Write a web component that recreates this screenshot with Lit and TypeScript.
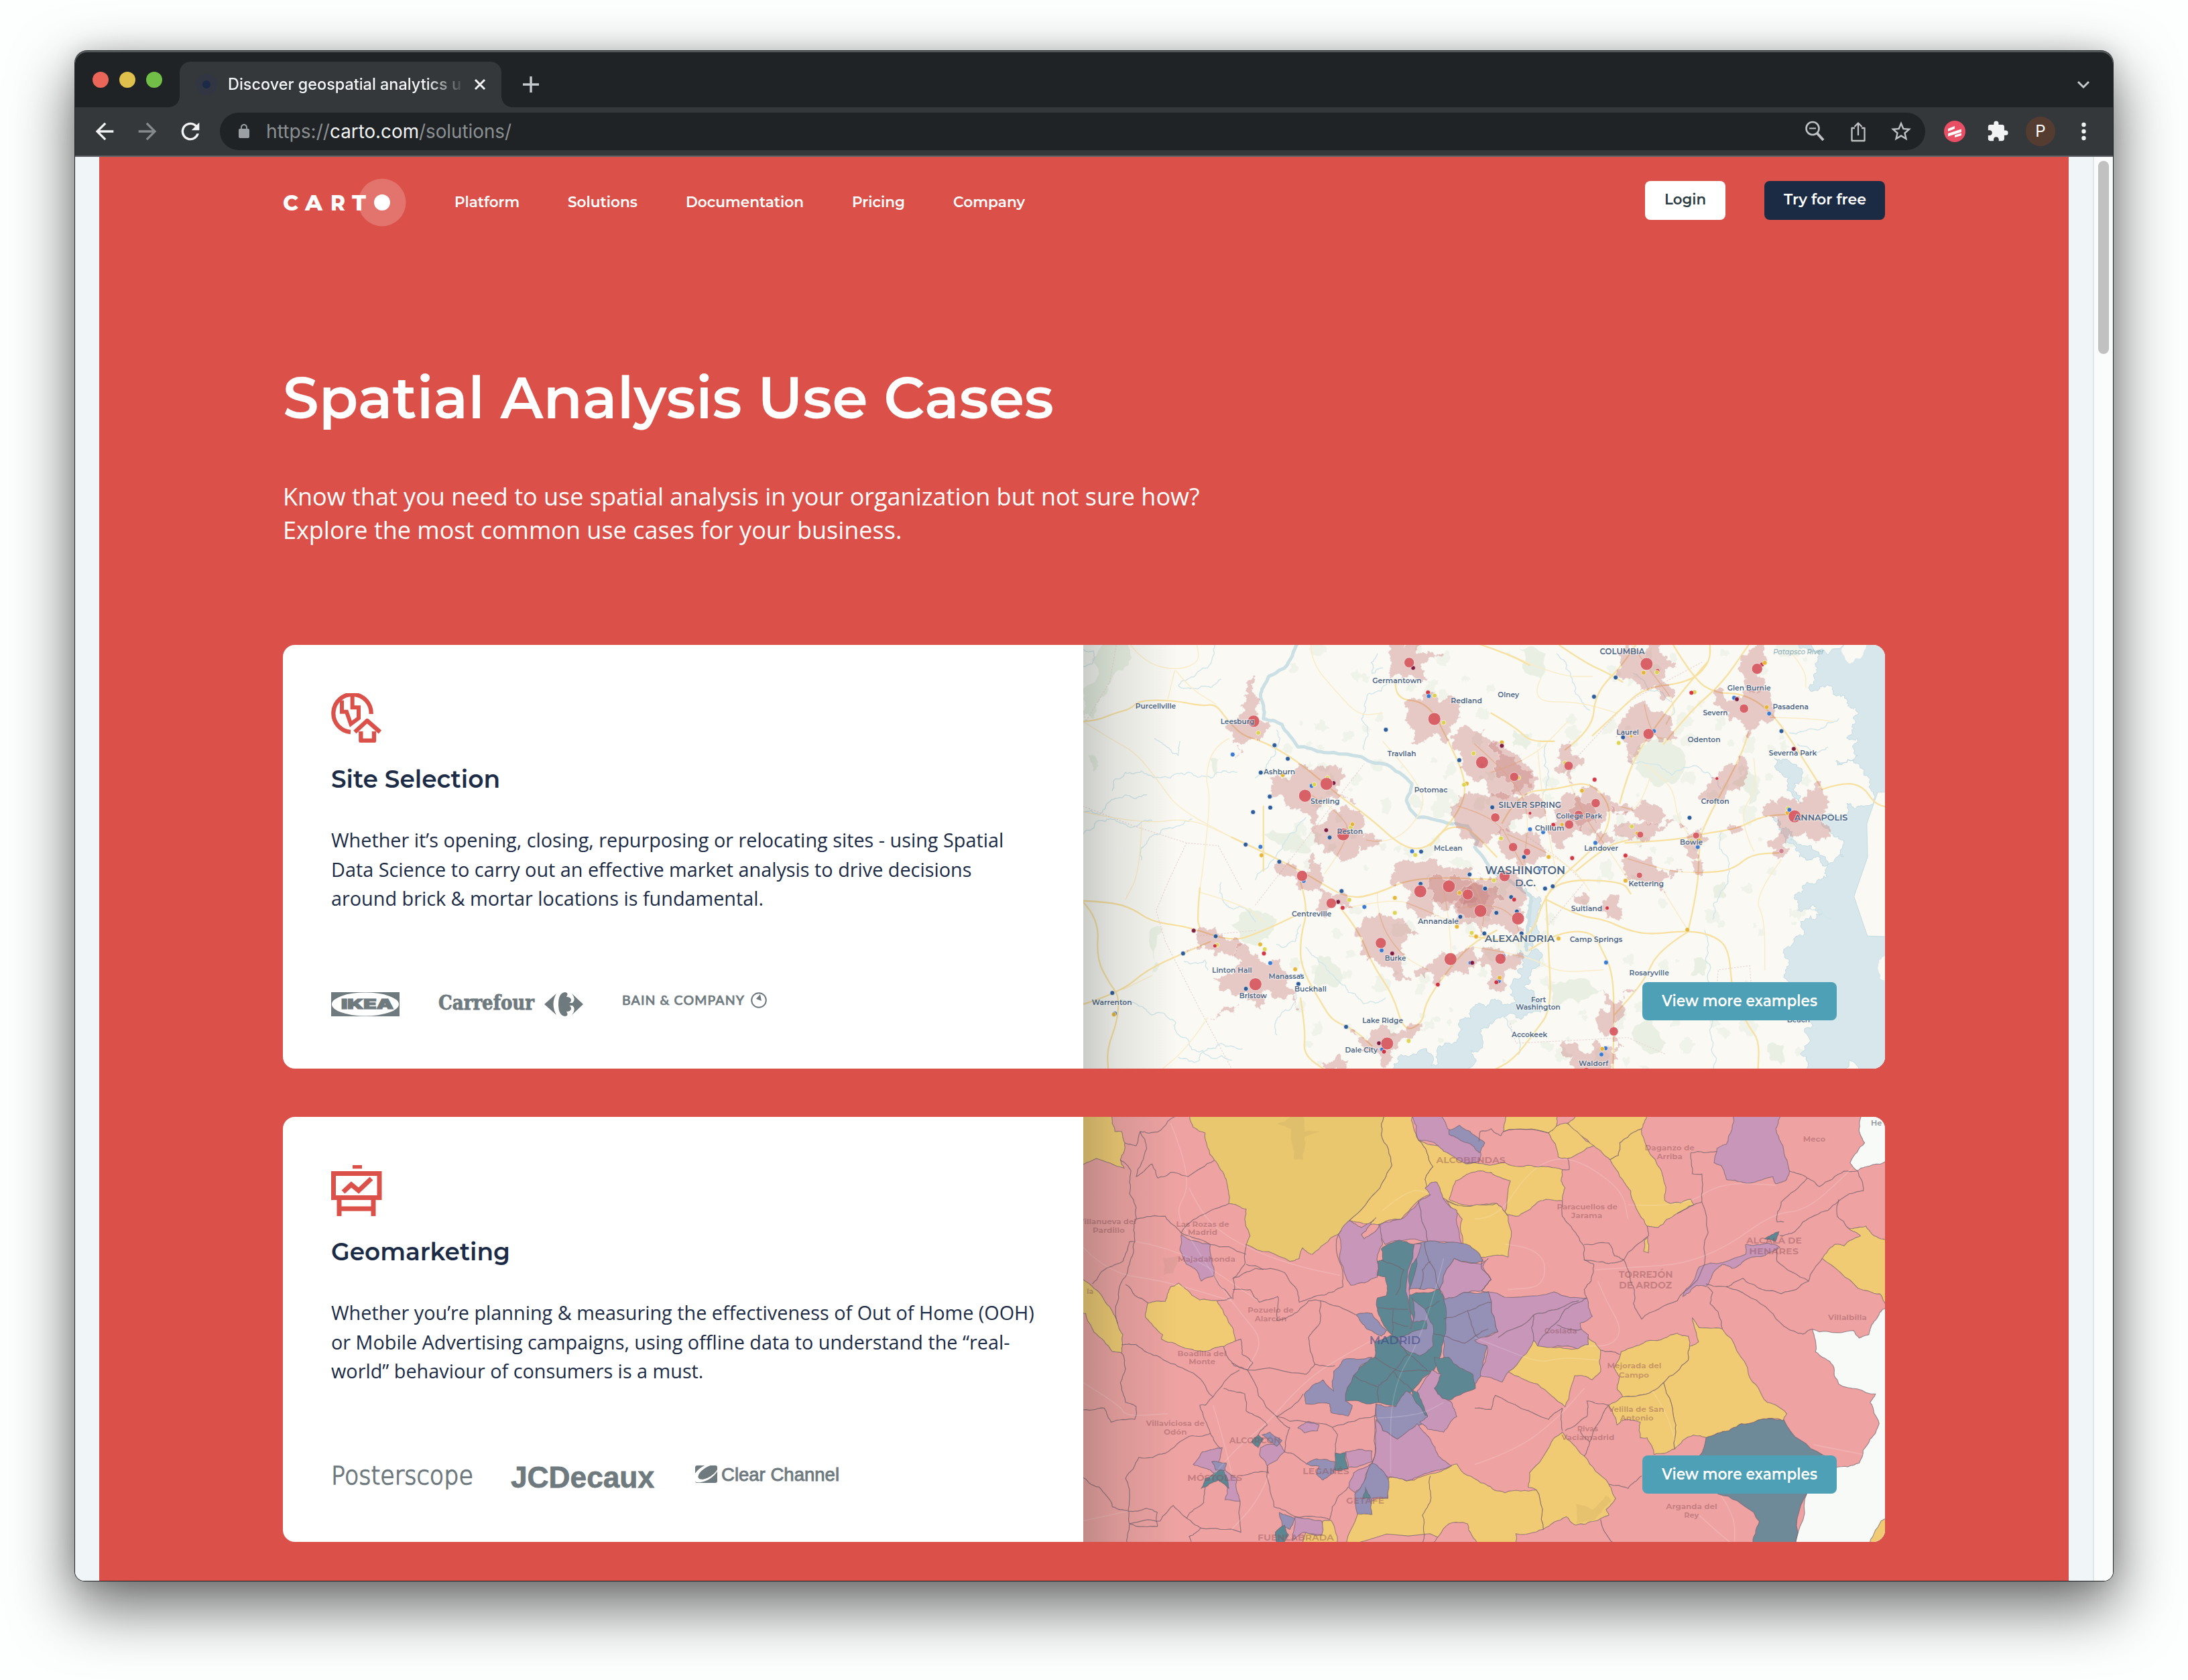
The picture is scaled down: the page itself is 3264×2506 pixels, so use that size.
import { LitElement, html, svg, css } from "lit";
import { customElement, property } from "lit/decorators.js";

type Pt = [number, number];

/* ---------- geometry helpers ---------- */

function parse(src: string, dy: number): Pt[] {
  let right = false;
  const out: Pt[] = [];
  for (const tok of src.trim().split(/\s+/)) {
    if (tok === "L") right = false;
    else if (tok === "R") right = true;
    else {
      const [u, v] = tok.split(",").map(Number);
      out.push([right ? 584 + u * 0.40816 : -16 + u * 0.39541, dy + v * 0.42092]);
    }
  }
  return out;
}

function noise(a: number, b: number): number {
  const s = Math.sin(a * 12.9898 + b * 78.233) * 43758.5453;
  return (s - Math.floor(s)) * 2 - 1;
}

// Midpoint displacement; the same edge always yields the same wiggle in either direction.
function rough(pts: Pt[], amp: number, closed: boolean, depth = 3): Pt[] {
  let cur = closed ? [...pts, pts[0]] : pts;
  for (let d = 0; d < depth; d++) {
    const next: Pt[] = [cur[0]];
    for (let i = 1; i < cur.length; i++) {
      const [ax, ay] = cur[i - 1];
      const [bx, by] = cur[i];
      const flip = ax < bx || (ax === bx && ay < by) ? 1 : -1;
      const n = noise(ax + bx, ay + by) * amp * flip;
      next.push([(ax + bx) / 2 - (by - ay) * n, (ay + by) / 2 + (bx - ax) * n], [bx, by]);
    }
    cur = next;
  }
  return cur;
}

const toPath = (p: Pt[], closed: boolean) =>
  "M" + p.map(([x, y]) => x.toFixed(1) + " " + y.toFixed(1)).join("L") + (closed ? "Z" : "");

function smooth(p: Pt[]): string {
  let d = `M${p[0][0]} ${p[0][1]}`;
  for (let i = 1; i < p.length - 1; i++) {
    const mx = (p[i][0] + p[i + 1][0]) / 2;
    const my = (p[i][1] + p[i + 1][1]) / 2;
    d += `Q${p[i][0]} ${p[i][1]} ${mx} ${my}`;
  }
  const e = p[p.length - 1];
  return d + `L${e[0]} ${e[1]}`;
}

const fit = (text: string, w: number, h: number, base: number, size: number, cls: string) => html`
  <svg class="fit ${cls}" width=${w} height=${h} viewBox="0 0 ${w} ${h}">
    <text x="0" y=${base} font-size=${size} textLength=${w} lengthAdjust="spacingAndGlyphs">${text}</text>
  </svg>`;

/* ---------- Washington map data ---------- */

const WATER = [
  "R 1160,10 1510,10 1510,1550 1225,1550 1205,1400 1180,1300 1135,1180 1140,1100 1200,1060 1270,980 1240,950 1180,970 1170,930 1200,880 1250,870 1290,850 1300,800 1350,730 1280,640 1360,590 1400,600 1458,550 1440,500 1330,450 1320,440 1400,420 1400,360 1360,360 1380,310 1390,250 1360,220 1290,170 1220,180 1245,100 1240,50",
  "R -310,1550 -270,1480 -160,1520 -100,1440 -60,1370 0,1310 80,1290 150,1290 172,1200 165,1110 225,1105 205,1200 210,1280 240,1330 120,1340 20,1390 30,1440 0,1510 -60,1550",
  "R 185,890 235,920 225,1000 210,1100 180,1100 195,1000",
  "R 1095,430 1150,500 1190,590 1195,510 1150,440",
  "R 1090,640 1130,700 1170,740 1230,790 1290,810 1230,740 1160,690",
];
const LAND = ["R 1350,10 1430,10 1415,70 1370,95 1340,50", "R 1475,1160 1510,1120 1510,1230 1480,1210"];
const GREEN = [
  "L 120,20 210,20 190,120 130,200 80,290 40,270 40,220 90,150",
  "L 600,1020 700,970 770,1000 740,1070 640,1080",
  "R 575,420 640,365 720,370 770,420 750,500 680,530 620,500",
  "R 940,520 1000,470 1030,580 1000,600",
  "R 800,1140 850,1150 840,1200 790,1200",
  "R 580,1390 650,1360 700,1440 640,1480",
  "L 290,1040 340,1030 330,1160 300,1190",
  "L 720,700 860,710 900,760 800,760",
  "R 880,880 930,860 920,920 870,930",
  "R 260,1230 400,1210 470,1250 380,1300 280,1300",
  "R 1080,1440 1130,1450 1120,1520 1080,1500",
  "L 930,1130 990,1160 1000,1240 930,1250",
  "R 160,40 260,60 240,150 180,120",
  "L 60,420 90,430 80,480",
  "L 520,430 560,430 545,490",
  "R 140,330 200,350 190,400 140,390",
];
const BLOBS = [
  "L 1205,10 1295,10 1300,60 1340,50 1400,65 1330,90 1340,150 1260,145 1200,150 1205,90",
  "L 1275,220 1340,195 1380,230 1465,245 1450,300 1420,320 1425,370 1340,360 1275,378 1290,330 1260,280",
  "L 640,270 655,230 645,210 665,200 680,135 685,200 705,215 690,260 720,300 755,318 720,355 690,360 630,375 618,430 605,378 575,320 620,290",
  "L 740,500 850,450 895,470 935,455 1025,455 1010,520 1070,590 1000,575 940,600 920,670 900,640 860,610 800,600 745,560",
  "L 960,640 1040,605 1100,650 1095,710 1170,716 1080,740 1010,800 985,760 900,690",
  "L 905,760 940,800 950,850 890,905 850,895 825,850 770,800 845,820 900,830",
  "L 930,895 1030,910 1060,960 1030,965 960,1000 925,950",
  "L 470,1040 540,1030 600,1075 640,1090 620,1115 560,1115 530,1140 500,1095 430,1115",
  "L 580,1190 640,1150 620,1090 700,1125 780,1140 820,1200 835,1290 870,1320 780,1280 720,1250 715,1330 690,1290 600,1270 530,1210",
  "L 630,1300 610,1345 560,1330 520,1355 570,1310",
  "L 1050,1390 1110,1430 1190,1390 1260,1400 1320,1370 1270,1430 1210,1490 1180,1550 1160,1500 1080,1470",
  "L 940,1510 1000,1480 1040,1500 1030,1550 960,1550",
  "L 1090,1020 1130,990 1220,1000 1310,1050 1240,1090 1240,1150 1280,1210 1210,1205 1160,1160 1110,1150",
  "L 1200,860 1290,800 1340,790 1400,820 1510,820 1520,870 1568,900 1540,950 1400,940 1360,950 1385,990 1320,1000 1260,970 1270,920 1205,890",
  "L 1350,850 1440,840 1510,870 1540,950 1440,950 1350,930",
  "L 1290,1200 1340,1160 1390,1110 1510,1095 1520,1160 1470,1200 1400,1200 1385,1240",
  "R 545,10 680,10 705,70 740,110 680,150 720,220 660,170 600,190 550,150 520,140",
  "R 1030,25 1060,40 1065,90 1055,180 985,170 980,130 960,110 965,60",
  "R 870,200 1000,190 1100,285 1040,300 1000,360 985,310 930,300",
  "R 560,270 635,240 720,290 745,365 650,350 605,390 580,460 560,380 525,310",
  "R 960,425 995,455 930,545 850,590 860,520 890,490",
  "R 1265,510 1290,600 1240,640 1300,710 1210,690 1150,700 1140,770 1105,790 1110,670 1050,620 1130,570 1180,590",
  "R -90,350 60,370 120,420 210,480 215,530 160,550 40,540 -60,470",
  "R 50,380 120,400 200,460 220,530 130,550 70,470",
  "R -90,600 -20,545 60,550 180,570 240,560 260,640 160,650 130,690 60,700 0,740 -60,680",
  "R 300,600 370,570 420,520 470,550 530,600 580,620 480,620 460,680 360,710 330,740 280,720 300,650",
  "R 500,595 600,600 700,635 620,650 540,630",
  "R 310,410 350,365 400,430 360,520 290,470",
  "R 80,660 150,690 240,700 260,760 230,790 180,820 110,780",
  "R 535,660 620,650 730,650 660,690 640,720 600,745 540,710 500,690",
  "R 745,665 840,670 830,700 860,715 820,740 825,850 770,750 775,710",
  "R 535,795 570,775 650,790 670,830 760,835 690,860 700,910 620,890 560,860",
  "R 355,910 400,905 530,920 520,950 545,1005 480,1000 410,950",
  "R -20,880 60,850 140,830 180,900 160,960 180,1050 120,1040 60,1020 20,1060 -70,1020 -40,930",
  "R -60,900 40,890 110,930 60,1000 -40,1000",
  "R 60,1095 160,1110 150,1180 110,1200 110,1250 60,1250 60,1190 10,1150",
  "R 470,1250 520,1300 590,1250 550,1330 520,1360 510,1400 550,1450 510,1480 500,1400 440,1360 490,1330",
  "R 310,1445 450,1430 500,1450 500,1550 350,1550",
  "R 440,700 520,720 470,740",
  "R 380,560 450,600 450,660 390,690 340,640",
  "R 920,675 980,680 940,700",
];
const MAJOR = [
  "L 20,300 80,300 160,270 220,255 250,225 380,225 490,245 540,238 580,290 640,350 720,370 850,440 1000,560 1120,640 1250,750 1340,750 1400,680 1470,670 1520,700 1600,780",
  "L 30,935 150,940 230,965 300,1010 440,1028 600,1080 700,1050 860,980",
  "L 40,940 100,1000 90,1140 140,1230 175,1270 170,1360 130,1460 135,1540",
  "L 30,1305 180,1260 280,1180 420,1120 520,1080",
  "L 600,710 760,780 900,850 1040,930 1150,910 1290,850 1600,860",
  "L 860,870 890,960 860,1060 860,1170 940,1300 980,1360 1060,1390 1130,1450",
  "L 1010,960 1080,1040 1130,1160 1210,1270 1250,1400 1320,1370 1330,1300 1400,1200 1500,1090 1600,1040",
  "L 720,600 720,830",
  "L 1220,150 1210,220 1340,230 1420,370 1490,520 1460,620 1350,740",
  "L 860,1280 880,1400 870,1480 960,1540",
  "L 480,890 470,1000 480,1030",
  "R 100,660 160,550 300,540 420,510 500,600 480,700 400,780 260,900 200,1090 -20,1060",
  "R 430,350 540,250 620,180 790,160 860,90 860,20",
  "R 690,380 790,260 900,170 1000,30",
  "R 530,590 560,480 620,370 760,190 850,90",
  "R 330,400 430,330 440,200 540,100 600,10",
  "R 310,30 400,90 490,130 540,160",
  "R 720,20 800,150 880,200 980,200 1080,260 1180,400 1270,540",
  "R 1270,540 1350,515 1420,530 1460,590 1510,605",
  "R 270,910 300,860 540,865 570,910",
  "R 260,920 270,1100 280,1320 220,1400 140,1500 60,1540",
  "R 260,930 380,990 470,1000 560,1040 640,1055 780,1040 880,1060 930,1110 940,1260 1000,1380 1040,1430 1035,1540",
  "R 200,1110 290,1050 430,1040 470,1120 500,1180 510,1290 505,1540",
  "R 780,1040 815,900 820,750 830,680 970,430 1000,340",
  "R 780,1045 670,1110 620,1220 510,1340",
  "R 550,730 740,720 850,695 960,680 1060,630 1200,630",
  "R 370,830 480,740 560,720",
  "R 0,20 120,60 200,100",
  "R 60,270 150,320 200,370 290,370",
  "R 800,835 880,835 950,820 1010,770 1120,765",
];
const MINOR = [
  "L 220,30 270,90 390,120 480,90 470,30",
  "L 385,120 360,220", "L 390,120 440,180 540,238",
  "L 40,300 140,360 240,410 330,520 400,610 620,720",
  "L 40,620 260,665 440,640 600,710",
  "L 590,360 530,390 500,500 520,560 500,760 480,900",
  "L 260,665 255,830 200,930", "L 480,905 650,950 720,1010",
  "L 900,30 900,90 1000,200 1080,280 1170,270",
  "L 510,1350 430,1460 340,1530", "L 190,1250 300,1200",
  "L 1150,910 1150,1000 1240,1130 1340,1180",
  "L 1110,720 1210,740 1340,600 1290,500 1170,370",
  "L 1040,960 1210,925 1310,960 1450,1020", "L 1500,860 1560,950 1540,1060", "L 1400,890 1420,1000 1430,1140", "L 950,840 1060,700 1000,620 900,560",
  "R 240,150 200,230 380,230 520,270", "R 120,60 300,140 430,140",
  "R 1120,790 1020,920 1060,1000 1060,1180", "R 620,450 700,510 730,560 740,640 780,700",
  "R 300,850 250,600 230,400", "R 0,1100 200,1130 300,1190 470,1180",
  "R 690,900 740,980 780,1040", "R 1160,60 1210,120 1210,180", "R 640,500 600,620 530,600",
  "R 1020,760 960,640 1030,540 1020,430",
  "R 0,380 140,500 200,620 180,800", "R -60,600 80,640 140,750 230,900", "R 60,480 200,440 340,300", "R 340,500 400,640 480,740 560,860", "R -40,960 60,940 160,1000 160,1100",
  "R 620,240 640,350 720,370", "R 1080,285 1240,290 1310,300", "R 540,780 700,830 800,835", "R 120,700 260,760 370,830 420,900", "R 560,10 640,120 740,240 700,310",
];
const RIVERS = [
  "L 540,20 510,110 400,170 470,185 560,150", "L 150,545 200,480 260,475 370,500 440,480 520,500 620,480",
  "L 40,620 100,630 200,560 280,560", "L 260,790 290,710 350,680 450,645", "L 300,650 180,660 100,650 40,700",
  "L 310,360 370,400 400,420 405,370", "L 560,870 570,940 650,960 690,1010",
  "L 180,1290 260,1310 350,1340 400,1410 520,1490 600,1500", "L 400,1490 480,1500 560,1440 640,1460",
  "L 880,1100 960,1180 1040,1260 1100,1300 1180,1280", "L 770,1410 790,1330 850,1250",
  "L 690,500 740,440 770,330", "L 1100,400 1090,290 1120,200 1190,160", "L 1150,60 1130,130 1170,110",
  "L 690,860 800,730 880,640", "L 770,1090 840,1080 860,1020", "L 420,1150 460,1155 500,1145 510,1180", "L 40,45 80,50 75,95 40,105",
  "R 300,60 350,130 380,210 420,260", "R 560,440 720,490 850,480 900,540", "R 840,1040 860,1180 870,1360 880,1540",
  "R 900,690 930,800 900,900 870,1000", "R 580,130 640,190 720,230 700,310", "R 250,560 270,480 260,380",
  "R 1180,380 1240,420 1290,390", "R 1150,340 1250,330 1330,290", "R 1300,1000 1220,960", "R 100,1340 160,1480",
];
const DASHED = [
  "L 165,30 140,160 50,300 30,220", "L 40,600 230,670 430,730 550,740 640,900",
  "L 430,730 360,870 315,970 350,1080 480,1320 600,1530", "L 690,950 1100,450", "L 690,1040 470,1060",
  "R 130,1370 150,1440 560,1420 700,1480", "R 885,1240 890,1180 1005,1165 1010,1230",
  "R 270,1020 400,870 300,780 180,700", "R 370,430 560,230 830,90",
];
type Dot = [string, number, number, string, number];
const C: Record<string, string> = { r: "#d75c62", n: "#225596", b: "#2f74cf", y: "#e6b32f", l: "#dcd34b", m: "#7a1338", c: "#cf2c3b", p: "#cf7d8c" };
const DOTS: Dot[] = (
  "L|b,1545,455,4 n,1313,875,4 b,872,865,4 l,962,500,4 m,985,518,4 y,793,490,4 y,1487,520,4 l,1050,675,4 m,1285,110,4 b,160,1335,4 b,1168,1462,4 c,1175,1470,4 b,1500,1155,3.5 l,545,1092,4 b,862,1200,3 " +
  "n,762,384,4 n,812,432,4 b,604,417,4 n,710,481,4 l,701,340,4 n,744,566,4 n,746,605,4 n,681,621,4 b,902,528,4 l,912,523,4 m,957,685,4 n,970,711,4 y,1056,664,4 n,653,736,4 b,709,744,4 y,713,774,4 n,780,797,4 n,1015,901,4 m,1002,939,4 c,1019,960,4 l,1044,932,4 b,1101,957,4 n,1182,329,4 c,1341,197,4 b,1344,210,4 l,1366,208,4 l,1400,304,4 l,1513,413,4 n,1459,437,4 l,1477,524,4 b,1281,760,4 n,1315,761,4 l,1293,773,4 n,1498,842,4 n,1555,892,4 y,1460,907,4 y,1216,925,4 l,1216,978,4 n,1463,992,4 y,1450,1027,4 l,1506,1049,4 y,1522,1062,4 m,457,1041,4 n,540,1061,4 c,537,1095,3.5 n,417,1122,4 y,708,1090,4 l,725,1107,4 c,722,1122,4 b,746,1156,4 y,840,1178,4 n,852,1230,4 n,654,1247,4 n,150,1262,4 y,156,1338,4 n,1032,1382,4 m,1156,1440,4 l,1268,1432,4 b,1166,1111,4 m,1206,1122,4 m,1508,1155,4 c,1378,1232,4 " +
  "r,683,299,10 r,1270,91,8.5 r,1365,291,10.5 r,1545,445,10.5 r,958,521,10.5 r,877,563,10.5 r,1021,700,10.5 r,866,847,9 r,976,944,8.5 r,1312,902,10.5 r,1420,884,10.5 r,1491,913,9 r,1539,971,10.5 r,1163,1085,9 r,1426,1142,10.5 r,690,1231,10.5 r,1187,1441,10.5~" +
  "R|y,99,374,4 b,655,334,4 l,160,499,4 l,803,196,4 l,791,722,3.5 y,820,720,3.5 y,593,696,3.5 y,1143,624,4 l,1145,608,4 b,250,692,4 b,88,1220,4 b,478,1458,4 n,154,973,4 b,105,1131,4 c,287,666,4 b,238,824,4 b,948,216,4 c,1050,98,4 l,330,447,4 c,668,121,4 " +
  "n,515,144,4 n,436,212,4 y,617,127,4 l,666,126,4 c,792,198,4 y,1060,92,4 m,958,221,4 y,1067,249,4 b,1076,272,4 n,1121,334,4 m,1166,397,4 n,542,356,4 y,572,352,3 l,526,376,4 m,99,386,4 c,438,506,4 y,392,545,4 c,885,502,3 n,64,604,4 c,202,625,3 b,202,682,4 y,319,665,3.5 l,96,714,4 b,441,730,4 l,574,672,4 n,785,641,4 b,1150,613,4 b,815,745,4 p,1121,759,4.5 y,270,780,4 n,180,780,4 c,356,784,4 c,551,775,4 y,551,864,4 l,70,863,4 n,38,892,4 n,257,892,4 n,285,884,4 n,133,922,4 c,144,931,4 n,79,978,4 y,5,1062,4 n,35,1051,4 n,171,1051,4 y,306,1069,4 c,484,961,3.5 y,777,1038,4 b,480,1154,4 y,91,1208,4 c,79,1224,4 y,466,1460,4 b,463,1480,4 " +
  "r,628,96,10.5 r,1032,113,9 r,984,254,7.5 r,635,344,9 r,343,457,7.5 r,144,496,7.5 r,442,589,7.5 r,75,640,7.5 r,380,631,7.5 r,345,665,7.5 r,140,745,7.5 r,191,762,6 r,605,701,5.5 r,809,704,5.5 r,1169,636,10.5 r,602,845,5 r,109,848,9 r,158,998,10.5 r,94,1141,9 r,508,1398,7.5 r,408,1541,7"
)
  .split("~")
  .flatMap((part) => {
    const [side, body] = part.split("|");
    return body.trim().split(/\s+/).map((t) => {
      const [k, x, y, r] = t.split(",");
      return [side, +x, +y, k, +r] as Dot;
    });
  });
type Label = [string, string, number, number, number, number];
const LABELS1: Label[] = [
  ["L", "Purcellville", 237, 390, 254, 11], ["L", "Leesburg", 558, 686, 309, 11], ["L", "Ashburn", 721, 840, 487, 11],
  ["L", "Sterling", 898, 1008, 591, 11], ["L", "Reston", 998, 1095, 698, 11], ["L", "Germantown", 1131, 1317, 165, 11],
  ["L", "Redland", 1427, 1545, 235, 11], ["L", "Travilah", 1188, 1296, 422, 11], ["L", "Potomac", 1289, 1415, 551, 11],
  ["L", "McLean", 1363, 1471, 757, 11], ["L", "Centreville", 827, 977, 991, 11], ["L", "Annandale", 1303, 1457, 1016, 11],
  ["L", "Burke", 1178, 1258, 1147, 11], ["L", "Linton Hall", 526, 677, 1190, 11], ["L", "Manassas", 740, 874, 1211, 11],
  ["L", "Buckhall", 837, 958, 1257, 11], ["L", "Bristow", 629, 733, 1280, 11], ["L", "Warrenton", 73, 224, 1304, 11],
  ["L", "Lake Ridge", 1093, 1247, 1369, 11], ["L", "Dale City", 1028, 1151, 1474, 11],
  ["R", "COLUMBIA", 457, 621, 61, 12], ["R", "Olney", 84, 162, 214, 11], ["R", "Laurel", 518, 600, 348, 11],
  ["R", "Glen Burnie", 923, 1082, 191, 11], ["R", "Severn", 834, 925, 278, 11], ["R", "Pasadena", 1089, 1220, 257, 11],
  ["R", "Odenton", 778, 898, 373, 11], ["R", "Severna Park", 1075, 1250, 421, 11], ["R", "Crofton", 827, 930, 592, 11],
  ["R", "SILVER SPRING", 87, 316, 607, 12], ["R", "College Park", 297, 466, 644, 11], ["R", "Chillum", 220, 327, 686, 11],
  ["R", "Landover", 400, 524, 759, 11], ["R", "Bowie", 750, 833, 737, 11], ["R", "ANNAPOLIS", 1168, 1363, 651, 13],
  ["R", "WASHINGTON", 38, 331, 840, 16], ["R", "D.C.", 147, 223, 883, 15], ["R", "Kettering", 562, 691, 883, 11],
  ["R", "Suitland", 352, 466, 971, 11], ["R", "ALEXANDRIA", 36, 292, 1080, 15], ["R", "Camp Springs", 347, 540, 1081, 11],
  ["R", "Rosaryville", 565, 710, 1199, 11], ["R", "Fort", 206, 260, 1294, 11], ["R", "Washington", 150, 313, 1321, 11],
  ["R", "Accokeek", 135, 265, 1418, 11], ["R", "Waldorf", 380, 488, 1521, 11], ["R", "Beach", 1141, 1225, 1366, 11],
];

// Small parkland patches scattered over the land area.
const PARKS: Pt[][] = Array.from({ length: 230 }, (_, i) => {
  const cx = 300 + (noise(i, 3.1) * 0.5 + 0.5) * 780;
  const cy = (noise(i, 7.7) * 0.5 + 0.5) * 632;
  const r = 3 + (noise(i, 1.3) * 0.5 + 0.5) * 9;
  return [0, 1, 2, 3, 4].map((k): Pt => [cx + Math.cos(k * 1.257) * r * (1 + noise(i, k) * 0.5), cy + Math.sin(k * 1.257) * r * (1 + noise(k, i) * 0.5)]);
});

/* ---------- Madrid map data ---------- */

const K: Record<string, string> = { Y: "#f1cb73", G: "#e9c76f", P: "#c796b9", B: "#9591b6", T: "#5d8793", S: "#6e8a98", W: "#f8faf8", K: "#eea3a2" };
const REGIONS: [string, string][] = [
  ["Y", "L 20,30 145,30 160,90 185,90 197,130 180,190 195,220 90,185 20,210"],
  ["Y", "L 20,585 70,635 115,680 170,770 190,810 185,875 150,870 80,800 50,735 20,735"],
  ["Y", "L 285,698 350,692 370,640 400,627 450,670 480,687 545,690 585,755 615,832 570,852 520,865 440,860 335,825 340,810 275,748"],
  ["G", "L 440,25 455,75 500,95 535,190 580,260 590,345 655,365 650,400 670,460 655,490 820,550 855,540 868,502 905,525 1000,455 1045,405 1160,290 1205,210 1165,100 1180,25"],
  ["Y", "L 1180,25 1280,25 1305,120 1360,215 1330,260 1355,310 1240,400 1150,420 1045,405 1160,290 1205,210 1165,100"],
  ["Y", "L 1305,120 1400,145 1490,205 R 0,200 110,200 220,215 320,225 315,265 330,290 320,335 240,335 160,390 120,385 110,375 -100,335 L 1350,310 1330,260 1360,215"],
  ["K", "L 1420,330 1445,265 1500,237 R 60,235 130,265 110,375 80,345 20,350 -60,345"],
  ["Y", "L 1410,335 1500,355 1568,350 R 80,345 110,375 122,390 122,535 40,535 0,535 L 1475,495 1470,400"],
  ["Y", "R 105,90 120,25 300,25 300,80 270,95"],
  ["Y", "R 270,95 300,70 335,60 435,140 340,185 305,180"],
  ["Y", "R 340,60 380,25 640,25 610,80 560,110 530,130 525,175 495,190 435,140"],
  ["Y", "R 610,80 610,100 660,190 690,260 695,335 715,345 790,330 800,350 740,380 670,430 630,425 600,380 570,300 530,250 495,190 525,175 530,130 560,110"],
  ["Y", "R 620,475 632,465 635,520 618,515"],
  ["P", "R 945,25 1125,25 1100,80 1120,130 1150,230 1140,260 1100,275 1090,250 980,270 920,260 900,210 875,200 885,150 920,135"],
  ["W", "R 1420,20 1530,20 1530,185 1430,215 1398,228 1372,200 1425,130 1405,90"],
  ["Y", "R 1365,432 1430,425 1460,460 1530,475 1530,740 1500,700 1480,665 1400,645 1270,540 1315,490 1350,495 1410,460"],
  ["W", "R 1530,710 1490,720 1455,770 1440,810 1405,822 1385,795 1260,800 1235,790 1245,870 1310,920 1330,985 1465,1020 1445,1050 1478,1125 1445,1180 1405,1265 1320,1280 1270,1235 1215,1370 1170,1560 1530,1560"],
  ["Y", "R 1440,1560 1485,1470 1530,1440 1530,1560"],
  ["S", "R 820,1240 845,1175 930,1150 975,1125 1045,1110 1130,1112 1270,1235 1215,1370 1172,1560 1015,1560 1040,1470 1020,1440 890,1375"],
  ["P", "R 820,570 990,525 990,490 1070,485 1115,500 1000,540 940,575 905,560 880,580 845,640 810,635 760,675"],
  ["T", "R 1060,470 1112,445 1100,480"],
  ["Y", "R 795,750 820,785 905,790 1000,950 1070,1050 1140,1090 1125,1115 1045,1110 975,1125 930,1150 845,1175 800,1165 730,1215 735,1130 690,980 780,900 785,850 818,835"],
  ["Y", "R 785,850 780,900 690,980 600,1025 540,1030 520,1000 530,960 510,930 535,870 640,830 740,805 780,815"],
  ["Y", "R 540,1030 600,1025 690,980 735,1130 730,1215 655,1235 630,1175 605,1175 605,1120 550,1110 520,1130 490,1060"],
  ["Y", "R 120,940 215,830 250,850 370,860 415,820 460,865 460,940 430,970 365,955 330,1065 230,985"],
  ["Y", "R 320,1155 400,1240 490,1340 515,1390 480,1430 490,1450 440,1470 370,1485 335,1455 250,1500 225,1360 195,1350 200,1300 280,1190"],
  ["Y", "L 1080,1420 1190,1390 1195,1315 1260,1328 1370,1300 1450,1268 1540,1335 R 40,1340 110,1370 225,1360 250,1500 150,1515 145,1560 L 1030,1560"],
  ["K", "L 1350,1560 1420,1480 1490,1480 1530,1560"],
  ["Y", "L 945,1470 975,1468 1000,1560 870,1560 880,1510 940,1520"],
  ["P", "L 1275,25 1385,25 1415,80 1480,110 1540,165 1535,195 1485,205 1400,160 1350,125 1305,120"],
  ["B", "L 1420,85 1460,68 1500,90 1555,130 1535,165 1490,130 1420,100"],
  ["P", "L 1355,270 1375,270 1400,330 1450,370 1475,495 1330,480 1180,490 1155,420 1240,400 1310,335 1350,315 1330,290"],
  ["P", "L 1045,405 1090,430 1145,395 1090,455 1100,470 1160,420 1170,490 1150,550 1150,605 1050,635 1010,550 1003,455"],
  ["B", "L 1290,490 1370,478 1500,495 1550,550 1440,540 1400,600 1385,650 1265,650 1280,560"],
  ["P", "L 1400,600 1440,540 1540,560 1568,540 R 30,570 60,615 25,655 L 1480,660 1405,685 1385,650"],
  ["B", "L 1400,685 1480,660 1560,660 R 50,658 85,800 10,830 45,850 20,960 0,990 L 1520,990 1490,950 1400,900 1400,800"],
  ["P", "R 50,658 290,658 410,680 430,745 385,770 390,790 415,810 415,845 375,860 230,850 215,830 125,940 100,978 20,955 45,850 0,830 85,800"],
  ["T", "L 1165,505 1230,475 1290,490 1265,670 1385,648 1405,700 1400,820 1360,940 1290,1000 1220,1065 1155,1050 1030,1045 1060,955 1140,890 1140,840 1205,810 1155,740 1150,680 1185,670 1180,605 1150,600 1150,550 1170,545"],
  ["B", "L 1280,680 1330,720 1360,775 1360,850 1310,885 1240,850 1225,820 1280,800 1335,790 1335,760 1285,765"],
  ["P", "L 1290,488 1315,488 1280,560 1270,680 1285,750 1275,790 1265,680"],
  ["T", "L 1365,890 1420,890 1510,950 1520,1000 1430,1040 1390,1035 1365,1000 1385,950"],
  ["B", "L 1070,740 1130,735 1185,795 1165,815 1110,790"],
  ["B", "L 985,940 1020,900 1130,890 1060,955 1030,1045 1055,1060 1040,1098 975,1085 970,1055 880,1055 875,1020 945,970 985,1010"],
  ["B", "L 1145,1055 1220,1065 1260,1010 1310,1050 1340,1105 1280,1160 1225,1180 1170,1150 1145,1100"],
  ["T", "L 1280,1005 1310,1020 1350,1095 1330,1095"],
  ["P", "L 1355,935 1390,950 1365,1000 1395,1035 1430,1050 1450,1100 1400,1155 1340,1145 1310,1120 1340,1100 1300,1010"],
  ["P", "L 1145,1110 1170,1150 1225,1180 1300,1125 1350,1180 1380,1240 1430,1275 1340,1300 1260,1328 1190,1315 1130,1265"],
  ["P", "L 410,455 520,490 533,600 485,620 460,575 430,560 405,510"],
  ["P", "L 455,1270 490,1225 565,1210 550,1275 620,1320 632,1400 575,1395 585,1350 520,1290"],
  ["T", "L 485,1355 500,1320 570,1285 590,1355 550,1325"],
  ["B", "L 525,1260 580,1265 575,1290 540,1290"],
  ["P", "L 705,1235 710,1210 780,1195 800,1225 735,1275"],
  ["T", "L 675,1190 700,1165 720,1180 700,1210"],
  ["B", "L 715,1165 745,1155 790,1185 770,1205"],
  ["P", "L 850,1140 890,1117 930,1130 925,1150 875,1158"],
  ["B", "L 880,1268 920,1250 990,1260 985,1300 945,1325 920,1305 930,1275"],
  ["T", "L 990,1230 1030,1228 1040,1285 985,1290"],
  ["P", "L 1030,1225 1130,1222 1130,1260 1040,1280"],
  ["P", "L 1060,1300 1130,1265 1100,1340 1065,1370 1042,1350"],
  ["B", "L 1130,1265 1190,1320 1190,1388 1130,1390 1130,1447 1075,1445 1065,1375 1100,1330"],
  ["T", "L 1105,1350 1125,1390 1095,1390"],
  ["P", "L 840,1455 940,1470 940,1520 870,1510 830,1540"],
  ["B", "L 780,1440 838,1460 820,1500 790,1490"],
  ["T", "L 765,1510 800,1485 815,1520 790,1560 770,1545"],
];
const BORDERS = (
  "L 255,90 320,92 410,30;L 255,90 280,150 240,250 300,205 322,255 370,235 435,250 535,192;L 197,130 240,140 255,90;L 180,190 220,230 215,310 240,360 240,400 235,480 215,560 175,650 170,770;L 240,400 350,390 410,450 520,490 655,525;L 410,450 490,385 590,345;L 655,490 650,560 605,610 605,685;L 605,610 690,575 800,590 850,660 855,695 950,670 1020,640 1020,605 1003,455;L 655,560 720,580;L 533,600 600,680 545,690;L 200,632 285,698;L 185,845 240,845 330,890 440,940 530,1030 500,1060 480,1060 520,1160;L 185,875 200,930 180,980 200,1050 240,1065 235,1110 145,1120 120,1070 30,1080;L 605,650 670,650 705,695 775,675 770,760 830,740 890,690 935,690 935,760 890,820 915,915 880,950 660,935 600,910;L 570,852 610,920 660,935 770,1100 870,1020;L 935,690 1070,740;L 915,915 990,920;L 530,1030 630,935;L 615,832 635,825 640,880 680,910 660,935;L 570,1000 650,1020 655,1080 735,1130;L 700,1165 735,1130;L 770,1100 980,1138 1145,1095;L 980,1138 1000,1165 990,1230;L 800,1225 880,1265;L 1145,1055 1130,1265;L 520,1160 440,1170 350,1230 250,1245 200,1320 210,1430 215,1480 205,1560;L 520,1160 560,1215;L 30,1310 100,1350 150,1420 210,1435 280,1425 320,1440 320,1490 215,1480;L 735,1275 740,1300 635,1310;L 735,1275 760,1420 840,1455 970,1465 980,1420 1040,1350;L 632,1400 635,1510 485,1495 430,1460 380,1415 330,1470 215,1480;L 430,1460 495,1405 500,1350;L 800,1225 820,1140 770,1100;L 75,630 140,570 190,550 215,480 235,480;L 1350,1310 1350,1400 1320,1450 1320,1560;L 485,1495 440,1525 450,1560;L 1140,890 1240,940 1350,940;L 1155,1050 1155,990 1210,940 1265,880;L 1060,955 1150,995;L 1165,545 1250,580 1220,670;L 1150,715 1265,720;L 1210,720 1205,810;L 1205,765 1265,780;L 1205,810 1240,850 1265,880 1340,940;L 1210,940 1280,1005;L 1330,480 1345,550 1385,650;L 1305,335 1340,480;L 1330,720 1385,690;L 1360,805 1400,815;L 1310,650 1320,580 1350,550;L 1400,755 1490,725 R 60,695;L 1400,815 1480,840 1568,790;L 1490,725 1530,820;" +
  "R 320,335 320,390 370,450 400,500 400,545 435,560 425,620 400,650 410,680;R 340,185 345,225 320,225;R 105,90 95,105 60,80 20,90 15,125;R 105,90 270,95;R 400,490 490,485 510,530 545,545;R 400,545 490,558 545,545 635,460 630,425;R 545,545 580,640 580,700 610,755 740,690 840,560 830,340 830,240 795,240 790,165 885,160;R 830,340 740,380;R 845,630 920,640 1010,680 1130,780 1200,808 1235,790;R 850,640 870,660 860,700 890,730 905,790;R 1150,230 1215,255 1260,285 1350,230 1400,230 1420,300 1370,310 1290,370 1200,410 1160,450 1115,460;R 1215,255 1120,340 1105,410 1130,410;R 1105,500 1105,550 1220,620 1270,540;R 920,640 980,610 1030,640 1120,665 1220,620;R 1330,330 1325,390 1365,432;R 0,1070 60,1075 75,1025 270,1110 320,1070 320,1150;R 460,865 530,880;R 330,1150 410,1100 410,1045 490,1060;R 400,1240 420,1190 490,1060;R 385,1150 420,1190;R 490,1340 560,1355 610,1310;R 460,1465 520,1560;R 85,820 215,740 215,830;R 230,850 330,720 410,680;R 215,740 300,720 380,690;R 300,775 390,790;R 30,540 25,575 60,615 25,655 50,658"
).split(";");
const FAINT = [
  "L 370,60 410,150 440,290 390,370 430,450 560,640 640,740 720,830 660,930", "L 440,290 480,370 560,450 700,520 860,570 1010,600",
  "L 40,500 130,590 350,620 600,690", "L 240,480 420,510 700,690", "L 1130,830 950,920 830,1020 740,1120 620,1210 520,1320",
  "L 40,1470 210,1435", "L 530,1060 560,1150 600,1300", "L 740,1310 700,1400 600,1500", "L 1400,540 1330,800 1200,1000 1200,1300",
  "L 1150,1105 1300,1100 1400,1050", "L 1170,370 1270,290 1350,310", "L 40,980 180,1060 200,1100 360,1090",
  "R 0,400 80,400 190,240 290,180 400,200 540,300 560,400", "R 450,620 480,690 540,790 500,850 400,850", "R 0,1270 150,1220 300,1110 400,1000",
  "R 440,580 600,570 760,560 920,500 1090,380 1210,370 1350,250 1510,90", "R 560,350 760,360 900,270 1100,280", "R 110,490 250,500 260,640 120,650",
  "R 0,820 130,870 240,910 320,890 450,900", "R 650,1010 700,1080 740,1210", "R 900,1380 950,1450 950,1550", "R 820,1450 900,1520 940,1550",
  "R 1240,1200 1500,1250",
];
const LABELS2: Label[] = [
  ["L", "Villanueva del", 22, 240, 418, 11], ["L", "Pardillo", 76, 197, 448, 11], ["L", "Las Rozas de", 391, 591, 427, 11],
  ["L", "Madrid", 435, 546, 457, 11], ["L", "Majadahonda", 397, 614, 550, 11], ["L", "la", 54, 79, 666, 11],
  ["L", "Pozuelo de", 661, 834, 731, 11], ["L", "Alarcón", 687, 808, 762, 11], ["L", "Boadilla del", 396, 580, 885, 11],
  ["L", "Monte", 438, 539, 914, 11], ["L", "Villaviciosa de", 277, 498, 1134, 11], ["L", "Odón", 344, 431, 1165, 11],
  ["L", "ALCORCÓN", 591, 785, 1196, 13], ["L", "MÓSTOLES", 433, 640, 1329, 13], ["L", "LEGANÉS", 868, 1044, 1305, 13],
  ["L", "GETAFE", 1032, 1176, 1408, 13], ["L", "FUENLABRADA", 698, 986, 1539, 13],
  ["L", "ALCOBENDAS", 1372, 1633, 201, 13],
  ["R", "Paracuellos de", 300, 522, 366, 11], ["R", "Jarama", 352, 466, 396, 11], ["R", "Daganzo de", 621, 803, 157, 11],
  ["R", "Arriba", 665, 759, 187, 11], ["R", "Meco", 1200, 1282, 126, 11], ["R", "TORREJÓN", 526, 724, 609, 14], ["R", "DE ARDOZ", 527, 721, 647, 14],
  ["R", "ALCALÁ DE", 992, 1195, 487, 13], ["R", "HENARES", 1003, 1183, 525, 13], ["R", "Villalbilla", 1291, 1433, 758, 11],
  ["R", "Coslada", 254, 374, 805, 11], ["R", "Mejorada del", 484, 682, 930, 11], ["R", "Campo", 526, 637, 961, 11],
  ["R", "Velilla de San", 488, 692, 1083, 11], ["R", "Antonio", 531, 653, 1114, 11], ["R", "Rivas", 374, 451, 1153, 11],
  ["R", "Vaciamadrid", 317, 510, 1183, 11], ["R", "Arganda del", 699, 886, 1428, 11], ["R", "Rey", 765, 819, 1459, 11],
];

const labels = (list: Label[], dy: number, cls: string) =>
  list.map(([s, t, a, b, v, size]) => {
    const [[x, y], [x2]] = parse(`${s} ${a},${v} ${b},${v}`, dy);
    return svg`<text class=${cls} x=${x} y=${y} font-size=${size} textLength=${x2 - x} lengthAdjust="spacingAndGlyphs">${t}</text>`;
  });

const shade = svg`
  <defs><linearGradient id="edge"><stop offset="0" stop-color="#23302c" stop-opacity=".22"/><stop offset=".35" stop-color="#23302c" stop-opacity=".11"/><stop offset="1" stop-color="#23302c" stop-opacity="0"/></linearGradient></defs>
  <rect width="140" height="636" fill="url(#edge)"/>`;

@customElement("washington-map")
class WashingtonMap extends LitElement {
  static styles = css`
    :host { display: block; }
    svg { display: block; width: 100%; height: 100%; background: #faf9f4; }
    path { fill: none; stroke-linejoin: round; stroke-linecap: round; }
    .water { fill: #d8e7ec; stroke: #c3dce2; stroke-width: 1; }
    .land { fill: #faf9f4; }
    .green { fill: #e9f0e3; }
    .park { fill: #eff3e9; }
    .major { stroke: #f8e0a0; stroke-width: 2.3; }
    .minor { stroke: #faecc8; stroke-width: 1.5; }
    .river { stroke: #d1e6e9; stroke-width: 1.4; }
    .potomac { stroke: #cbe0e4; stroke-width: 5; }
    .dash { stroke: #ead5d4; stroke-width: 1.2; stroke-dasharray: 1.5 3; }
    .blob { fill: #c47876; fill-opacity: .38; stroke: #fff; stroke-opacity: .45; stroke-width: .8; }
    .road { stroke: #dfa789; stroke-opacity: .6; stroke-width: 1.4; }
    .dot { stroke: #fff; stroke-opacity: .75; stroke-width: .8; fill-opacity: .95; }
    .name { font-family: Montserrat, Inter, sans-serif; font-weight: 600; fill: #4d6684; stroke: #fff; stroke-opacity: .6; stroke-width: 2; paint-order: stroke; }
    .sea { font-family: Montserrat, Inter, sans-serif; font-style: italic; font-weight: 500; fill: #8db1b9; }
  `;
  render() {
    const dy = -12;
    const potomac = parse("L 850,20 800,110 740,140 710,200 720,290 790,310 850,390 950,410 1090,425 1200,460 1280,520 1260,580 1300,640 1400,655 1490,670 1530,720 R 0,745 60,830 150,880 205,920 200,1000 190,1110", dy);
    const blobs = BLOBS.map((b) => toPath(rough(parse(b, dy), 0.4, true, 5), true));
    return html`<svg viewBox="0 0 1196 632" preserveAspectRatio="none">
      ${PARKS.map((p) => svg`<path class="park" d=${toPath(rough(p, 0.3, true), true)}/>`)}
      ${GREEN.map((g) => svg`<path class="green" d=${toPath(rough(parse(g, dy), 0.25, true), true)}/>`)}
      ${WATER.map((w) => svg`<path class="water" d=${toPath(rough(parse(w, dy), 0.38, true, 4), true)}/>`)}
      ${LAND.map((w) => svg`<path class="land" d=${toPath(rough(parse(w, dy), 0.2, true), true)}/>`)}
      ${RIVERS.map((r) => svg`<path class="river" d=${toPath(rough(parse(r, dy), 0.2, false, 4), false)}/>`)}
      <path class="potomac" d=${toPath(rough(potomac, 0.08, false), false)} />
      ${DASHED.map((r) => svg`<path class="dash" d=${toPath(parse(r, dy), false)}/>`)}
      ${MINOR.map((r) => svg`<path class="minor" d=${smooth(parse(r, dy))}/>`)}
      ${MAJOR.map((r) => svg`<path class="major" d=${smooth(parse(r, dy))}/>`)}
      <clipPath id="inside">${blobs.map((d) => svg`<path d=${d}/>`)}</clipPath>
      ${blobs.map((d) => svg`<path class="blob" d=${d}/>`)}
      <g clip-path="url(#inside)">${[...MAJOR, ...MINOR].map((r) => svg`<path class="road" d=${smooth(parse(r, dy))}/>`)}</g>
      ${DOTS.map(([s, u, v, k, r]) => {
        const [[x, y]] = parse(`${s} ${u},${v}`, dy);
        return svg`<circle class="dot" cx=${x} cy=${y} r=${k === "r" ? r * 0.9 : r * 0.85} fill=${C[k]}/>`;
      })}
      ${labels(LABELS1, dy, "name")}
      ${labels([["R", "Patapsco River", 1091, 1276, 61, 11]], dy, "sea")}
      ${shade}
    </svg>`;
  }
}

@customElement("madrid-map")
class MadridMap extends LitElement {
  static styles = css`
    :host { display: block; }
    svg { display: block; width: 100%; height: 100%; background: #eea3a2; }
    .area { stroke: #75626d; stroke-opacity: .7; stroke-width: 1.1; stroke-linejoin: round; }
    .line { fill: none; stroke: #75626d; stroke-opacity: .75; stroke-width: 1.2; stroke-linejoin: round; }
    .street { fill: none; stroke: #fff; stroke-opacity: .16; stroke-width: 1.6; }
    .stain { fill: #7b6a52; fill-opacity: .09; }
    .name { font-family: Montserrat, Inter, sans-serif; font-weight: 700; fill: #8a4c52; fill-opacity: .42; }
    .gray { font-family: Montserrat, Inter, sans-serif; font-weight: 600; fill: #8c9396; }
    .city { font-family: Montserrat, Inter, sans-serif; font-weight: 600; fill: #3a4687; fill-opacity: .6; }
  `;
  render() {
    const dy = -16;
    return html`<svg viewBox="0 0 1196 634" preserveAspectRatio="none">
      ${REGIONS.map(([k, p]) => svg`<path class="area" fill=${K[k]} d=${toPath(rough(parse(p, dy), 0.09, true), true)}/>`)}
      ${["L 825,35 870,35 875,90 935,90 875,110 870,190 835,190 825,80 770,65", "L 340,540 400,530 380,590 345,600", "R 370,1410 430,1430 480,1380 500,1400 440,1465 370,1480"].map(
        (p) => svg`<path class="stain" d=${toPath(rough(parse(p, dy), 0.1, true), true)}/>`,
      )}
      ${BORDERS.map((p) => svg`<path class="line" d=${toPath(rough(parse(p, dy), 0.09, false), false)}/>`)}
      ${FAINT.map((p) => svg`<path class="street" d=${smooth(parse(p, dy))}/>`)}
      ${labels(LABELS2, dy, "name")}
      ${labels([["L", "MADRID", 1120, 1313, 843, 16]], dy, "city")}
      ${labels([["R", "He", 1448, 1488, 68, 11]], dy, "gray")}
      ${shade}
    </svg>`;
  }
}

/* ---------- use-case card ---------- */

const siteIcon = svg`<svg class="icon" viewBox="30 30 228 228" fill="none" stroke="#db5149" stroke-width="19">
  <path d="M209 123A84.500 84.500 0 1 0 117 204"/><path d="M78 62V113H99L118 168L153 142V94H125V42" stroke-width="18"/>
  <path d="M136 204L191 153L249 204" stroke-linejoin="round"/><path d="M163 201V242H222V201" stroke-linejoin="round"/></svg>`;
const boardIcon = svg`<svg class="icon" viewBox="0 0 76 76" fill="none" stroke="#db5149" stroke-width="7">
  <path d="M32 2.500H46" stroke-width="5.500"/><rect x="3.500" y="12.500" width="68.500" height="36"/><path d="M18 40L30 29L41 38L60 20"/>
  <path d="M12 52V76M63 52V76M12 65H63"/></svg>`;

const siteLogos = html`
  <svg class="logo" width="102" height="42" viewBox="0 0 102 42">
    <path fill="#6f7a7f" fill-rule="evenodd" d="M0 0H102V36H0ZM1 18A50 17.500 0 0 0 101 18A50 17.500 0 0 0 1 18Z"/>
    <text class="heavy" x="15" y="25" font-size="20" textLength="78" lengthAdjust="spacingAndGlyphs">IKEA</text>
  </svg>
  <svg class="logo l2" width="216" height="42" viewBox="0 0 216 42">
    <text class="slab" x="0" y="26" font-size="29" textLength="143" lengthAdjust="spacingAndGlyphs">Carrefour</text>
    <path d="M176 2Q167 18 176 34L158 18ZM199 2L216 18L199 34Q206 25 200 20H194Q198 20 198 25Q197 29 191 29Q195 35 189 36Q179 35 179 18Q179 1 189 0Q195 1 191 7Q197 7 198 11Q198 16 194 16H200Q206 11 199 2Z" fill="#6f7a7f"/>
  </svg>
  <svg class="logo l3" width="218" height="42" viewBox="0 0 218 42">
    <text class="bain" x="0" y="19" font-size="19.5" textLength="182" lengthAdjust="spacing">BAIN &amp; COMPANY</text>
    <circle cx="204" cy="12" r="10.800" fill="none" stroke="#6f7a7f" stroke-width="2"/><path d="M206 3L208 13L200 10Z" fill="#6f7a7f"/>
  </svg>`;
const geoLogos = html`
  <svg class="logo" width="212" height="42" viewBox="0 0 212 42">
    <text class="poster" x="0" y="28" font-size="38" textLength="212" lengthAdjust="spacingAndGlyphs">Posterscope</text>
  </svg>
  <svg class="logo g2" width="214" height="42" viewBox="0 0 214 42">
    <text class="jcd" x="0" y="33" font-size="45" textLength="214" lengthAdjust="spacingAndGlyphs">JCDecaux</text>
  </svg>
  <svg class="logo g3" width="216" height="42" viewBox="0 0 216 42">
    <clipPath id="ccbox"><rect width="33" height="26" rx="3"/></clipPath>
    <g clip-path="url(#ccbox)"><rect width="33" height="26" fill="#6f7a7f"/>
      <ellipse cx="16" cy="11" rx="21" ry="10.500" transform="rotate(-32 16 11)" fill="#fff"/>
      <ellipse cx="19" cy="10" rx="16.500" ry="7.500" transform="rotate(-32 19 10)" fill="#6f7a7f"/></g>
    <text class="cc" x="39" y="23" font-size="27.5" textLength="176" lengthAdjust="spacingAndGlyphs">Clear Channel</text>
  </svg>`;

@customElement("case-card")
class CaseCard extends LitElement {
  @property() kind = "site";
  static styles = css`
    :host { display: grid; grid-template-columns: 1194px 1fr; border-radius: 18px; overflow: hidden; background: #fff; }
    .info { display: flex; flex-direction: column; padding: 72px; box-sizing: border-box; }
    .icon { width: 76px; height: 76px; display: block; }
    .title { margin: 28px 0 0; display: flex; }
    .fit { display: block; overflow: visible; font-family: Montserrat, Inter, sans-serif; font-weight: 600; fill: #1c2b46; }
    .body { margin: 45px 0 0; font: 28.8px/43.5px "Open Sans", sans-serif; color: #1c2b46; white-space: nowrap; }
    .logos { display: flex; margin-top: auto; }
    .logo { display: block; overflow: visible; fill: #6f7a7f; }
    .l2 { margin-left: 58px; } .l3 { margin-left: 58px; }
    .g2 { margin-left: 56px; } .g3 { margin-left: 61px; }
    .heavy { font-family: Inter, sans-serif; font-weight: 900; stroke: #6f7a7f; stroke-width: 1.2; }
    .slab { font-family: "DejaVu Serif", serif; font-weight: 700; font-stretch: condensed; stroke: #6f7a7f; stroke-width: .8; }
    .bain { font-family: Lato, sans-serif; font-weight: 500; stroke: #6f7a7f; stroke-width: .7; }
    .poster { font-family: "DejaVu Sans", sans-serif; font-weight: 200; stroke: #6f7a7f; stroke-width: 1.5; }
    .jcd { font-family: "Liberation Sans", sans-serif; font-weight: 700; stroke: #6f7a7f; stroke-width: .8; }
    .cc { font-family: "Liberation Sans", sans-serif; stroke: #6f7a7f; stroke-width: .9; }
    .visual { position: relative; }
    .map { width: 100%; height: 100%; }
    .more { position: absolute; right: 72px; bottom: 72px; width: 290px; height: 57px; border-radius: 8px; background: #4da0b5; display: flex; justify-content: center; }
    .more .fit { fill: #fff; }
  `;
  render() {
    const site = this.kind === "site";
    return html`
      <section class="info">
        ${site ? html`${siteIcon}` : html`${boardIcon}`}
        <h2 class="title">${site ? fit("Site Selection", 252, 48, 36.5, 36, "") : fit("Geomarketing", 267, 49, 37.5, 36, "")}</h2>
        <p class="body">
          ${site
            ? html`Whether it’s opening, closing, repurposing or relocating sites - using Spatial<br />Data Science to carry out an effective market analysis to drive decisions<br />around brick &amp; mortar locations is fundamental.`
            : html`Whether you’re planning &amp; measuring the effectiveness of Out of Home (OOH)<br />or Mobile Advertising campaigns, using offline data to understand the “real-<br />world” behaviour of consumers is a must.`}
        </p>
        <div class="logos">${site ? siteLogos : geoLogos}</div>
      </section>
      <div class="visual">
        ${site ? html`<washington-map class="map"></washington-map>` : html`<madrid-map class="map"></madrid-map>`}
        <a class="more">${fit("View more examples", 232, 57, 35.5, 23, "")}</a>
      </div>`;
  }
}

/* ---------- browser window ---------- */

const mi = (d: string, size: number, color: string) =>
  html`<svg class="glyph" width=${size} height=${size} viewBox="0 0 24 24" fill=${color}><path d=${d} /></svg>`;

@customElement("app-root")
class AppRoot extends LitElement {
  static styles = css`
    :host { display: block; box-sizing: border-box; width: 3264px; height: 2506px; padding: 76px 112px 148px 112px; background: #fdfefe; overflow: hidden; }
    .window { display: flex; flex-direction: column; height: 2282px; border-radius: 18px 18px 14px 14px; box-shadow: 0 0 0 1px rgba(10,14,16,.85), 0 36px 90px 4px rgba(0,0,0,.58), 0 0 34px rgba(0,0,0,.14); }
    .strip { height: 84px; flex: none; display: flex; background: #1f2325; border-radius: 18px 18px 0 0; box-shadow: inset 0 2px 0 #565b5b; padding-left: 26px; }
    .lights { display: flex; gap: 16px; margin-top: 31px; }
    .light { width: 24px; height: 24px; border-radius: 50%; }
    .red { background: #ec6559; } .amber { background: #e0c04c; } .lime { background: #71bf46; }
    .tab { position: relative; width: 480px; height: 68px; margin: 16px 0 0 26px; border-radius: 16px 16px 0 0; background: #35383a; display: flex; align-items: center; box-sizing: border-box; padding-left: 24px; }
    .tab::before, .tab::after { content: ""; position: absolute; bottom: 0; width: 16px; height: 16px; }
    .tab::before { left: -16px; background: radial-gradient(circle at 0 0, transparent 15.5px, #35383a 16px); }
    .tab::after { right: -16px; background: radial-gradient(circle at 100% 0, transparent 15.5px, #35383a 16px); }
    .favicon { width: 32px; height: 32px; border-radius: 50%; background: radial-gradient(circle, #1b2a47 5.5px, #323643 6.500px); }
    .tabtitle { margin-left: 16px; mask-image: linear-gradient(90deg, #000 85%, transparent 102%); }
    .fit { display: block; overflow: visible; font-family: Inter, sans-serif; fill: #f1f3f4; }
    .tabtitle .fit { font-weight: 500; }
    .glyph { display: block; flex: none; overflow: visible; }
    .close { margin-left: 20px; }
    .plus { margin: 38px 0 0 32px; }
    .chev { margin: 44px 35px 0 auto; }
    .bar { height: 74px; flex: none; box-sizing: border-box; background: #35383a; border-bottom: 2px solid #5f6266; display: flex; align-items: center; padding-left: 24px; }
    .forward { margin: 0 24px; }
    .omni { flex: none; width: 2544px; height: 56px; box-sizing: border-box; border-radius: 28px; margin-left: 24px; background: #1f2325; display: flex; align-items: center; padding: 0 18px 0 24px; }
    .url { margin-left: 21px; display: flex; }
    .dim { fill: #8b9093; }
    .acts { margin-left: auto; display: flex; align-items: center; gap: 28px; }
    .ext { margin-left: 28px; } .puzzle { margin-left: 31px; }
    .avatar { width: 44px; height: 44px; border-radius: 50%; background: #553c31; color: #fff; margin-left: 25px; font: 24px/44px Inter, sans-serif; text-align: center; }
    .dots { margin-left: 39px; }
    .view { flex: 1; min-height: 0; display: flex; background: #f0f5f8; border-radius: 0 0 14px 14px; overflow: hidden; }
    .page { width: 2938px; margin-left: 36px; background: #db5149; box-sizing: border-box; padding: 0 274px; overflow: hidden; }
    .rail { margin-left: auto; width: 30px; box-sizing: border-box; border-left: 2px solid #e3e6e8; background: #fafbfb; padding: 6px 0 0 6px; }
    .thumb { width: 16px; height: 288px; border-radius: 8px; background: #c1c1c2; }
    .header { height: 72px; padding: 32px 0; display: flex; align-items: center; }
    .header .fit, .hero .fit { font-family: Montserrat, Inter, sans-serif; font-weight: 600; fill: #fff; }
    .brand { display: block; overflow: visible; }
    .brandtext { font-family: Montserrat, Inter, sans-serif; font-weight: 800; fill: #fff; }
    .nav { display: flex; gap: 72px; margin-left: 73px; }
    .ctas { margin: -6px 0 0 auto; display: flex; gap: 58px; }
    .btn { height: 58px; border-radius: 8px; display: flex; justify-content: center; }
    .login { width: 120px; background: #fff; } .header .login .fit { fill: #2c3c43; }
    .try { width: 180px; background: #1c2b44; }
    .hero { margin: 174px 0 0; display: flex; }
    .lead { margin: 72px 0 146px; font: 36px/50px "Open Sans", sans-serif; color: #fff; white-space: nowrap; }
    .one { height: 632px; } .two { height: 634px; margin-top: 72px; }
  `;
  render() {
    const nav: [string, number][] = [["Platform", 97], ["Solutions", 104], ["Documentation", 176], ["Pricing", 79], ["Company", 107]];
    return html`
      <div class="window">
        <div class="strip">
          <div class="lights"><i class="light red"></i><i class="light amber"></i><i class="light lime"></i></div>
          <div class="tab">
            <span class="favicon"></span>
            <div class="tabtitle">${fit("Discover geospatial analytics u", 348, 36, 26, 24, "")}</div>
            <svg class="glyph close" width="16" height="16"><path d="M1 1L15 15M15 1L1 15" stroke="#f1f3f4" stroke-width="3" /></svg>
          </div>
          <svg class="glyph plus" width="24" height="24"><path d="M12 0V24M0 12H24" stroke="#c3c8cc" stroke-width="3.500" /></svg>
          <svg class="glyph chev" width="18" height="14"><path d="M1 2L9 10L17 2" fill="none" stroke="#c3c8cc" stroke-width="3" /></svg>
        </div>
        <div class="bar">
          ${mi("M20 11H7.830l5.590-5.590L12 4l-8 8 8 8 1.410-1.410L7.830 13H20v-2z", 40, "#f1f3f4")}
          <div class="forward">${mi("M12 4l-1.410 1.410L16.170 11H4v2h12.170l-5.580 5.590L12 20l8-8z", 40, "#858a8d")}</div>
          ${mi("M17.650 6.350A7.960 7.960 0 0 0 12 4a8 8 0 1 0 7.730 10h-2.080A6 6 0 1 1 12 6c1.660 0 3.140.690 4.220 1.780L13 11h7V4l-2.350 2.350z", 40, "#f1f3f4")}
          <div class="omni">
            ${mi("M18 8h-1V6c0-2.760-2.240-5-5-5S7 3.240 7 6v2H6c-1.100 0-2 .900-2 2v10c0 1.100.900 2 2 2h12c1.100 0 2-.900 2-2V10c0-1.100-.900-2-2-2zM15.100 8H8.900V6c0-1.710 1.390-3.100 3.100-3.100s3.100 1.390 3.100 3.100v2z", 24, "#9aa0a4")}
            <div class="url">${fit("https://", 95, 36, 28, 28, "dim")}${fit("carto.com", 133, 36, 28, 28, "")}${fit("/solutions/", 138, 36, 28, 28, "dim")}</div>
            <div class="acts">
              <svg class="glyph" width="36" height="36" fill="none" stroke="#bfc1c3" stroke-width="2.600"><circle cx="14" cy="13.500" r="9.500" /><path d="M9 13.500H19" stroke-width="2" /><path d="M20.500 20.500L30 31" stroke-width="4" /></svg>
              <svg class="glyph" width="36" height="36" fill="none" stroke="#bfc1c3" stroke-width="2.300"><path d="M13 13H8.500V32H27.500V13H23M18 24V6M12.500 11L18 5.500L23.500 11" stroke-linejoin="round" /></svg>
              ${mi("M22 9.240l-7.190-.620L12 2 9.190 8.630 2 9.240l5.460 4.730L5.820 21 12 17.270 18.180 21l-1.630-7.030L22 9.240zM12 15.400l-3.760 2.270 1-4.280-3.320-2.880 4.380-.380L12 6.100l1.710 4.040 4.380.380-3.320 2.880 1 4.280L12 15.400z", 36, "#bfc1c3")}
            </div>
          </div>
          <svg class="glyph ext" width="32" height="32"><circle cx="16" cy="16" r="16" fill="#e94f64" /><path d="M6 12L16 8V12L6 16ZM6 19L26 12.500V17L6 23.500ZM16 21.500L26 18.500V22L16 25Z" fill="#fff" /></svg>
          <div class="puzzle">${mi("M20.500 11H19V7c0-1.100-.900-2-2-2h-4V3.500a2.500 2.500 0 0 0-5 0V5H4c-1.100 0-1.990.900-1.990 2v3.800H3.500c1.490 0 2.700 1.210 2.700 2.700s-1.210 2.700-2.700 2.700H2V20c0 1.100.900 2 2 2h3.800v-1.500c0-1.490 1.210-2.700 2.700-2.700s2.700 1.210 2.700 2.700V22H17c1.100 0 2-.900 2-2v-4h1.500a2.500 2.500 0 0 0 0-5z", 34, "#f1f3f4")}</div>
          <div class="avatar">P</div>
          <svg class="glyph dots" width="7" height="28" fill="#f1f3f4"><circle cx="3.500" cy="4" r="3.200" /><circle cx="3.500" cy="14" r="3.200" /><circle cx="3.500" cy="24" r="3.200" /></svg>
        </div>
        <div class="view">
          <main class="page">
            <header class="header">
              <svg class="brand" width="183" height="72" viewBox="0 0 183 72">
                <circle cx="148" cy="36" r="35.500" fill="#fff" fill-opacity=".2" />
                ${[["C", 0, 23], ["A", 33, 26], ["R", 71, 22], ["T", 103, 21]].map(
                  ([t, x, w]) => svg`<text class="brandtext" x=${x} y="48" font-size="33" textLength=${w} lengthAdjust="spacingAndGlyphs">${t}</text>`,
                )}
                <circle cx="148" cy="36" r="12" fill="#fff" />
              </svg>
              <nav class="nav">${nav.map(([t, w]) => fit(t, w, 30, 21.5, 21.6, ""))}</nav>
              <div class="ctas">
                <a class="btn login">${fit("Login", 62, 58, 34.5, 21.6, "")}</a>
                <a class="btn try">${fit("Try for free", 123, 58, 34.5, 21.6, "")}</a>
              </div>
            </header>
            <h1 class="hero">${fit("Spatial Analysis Use Cases", 1150, 100, 80, 87, "")}</h1>
            <p class="lead">Know that you need to use spatial analysis in your organization but not sure how?<br />Explore the most common use cases for your business.</p>
            <case-card class="one" kind="site"></case-card>
            <case-card class="two" kind="geo"></case-card>
          </main>
          <div class="rail"><div class="thumb"></div></div>
        </div>
      </div>`;
  }
}
